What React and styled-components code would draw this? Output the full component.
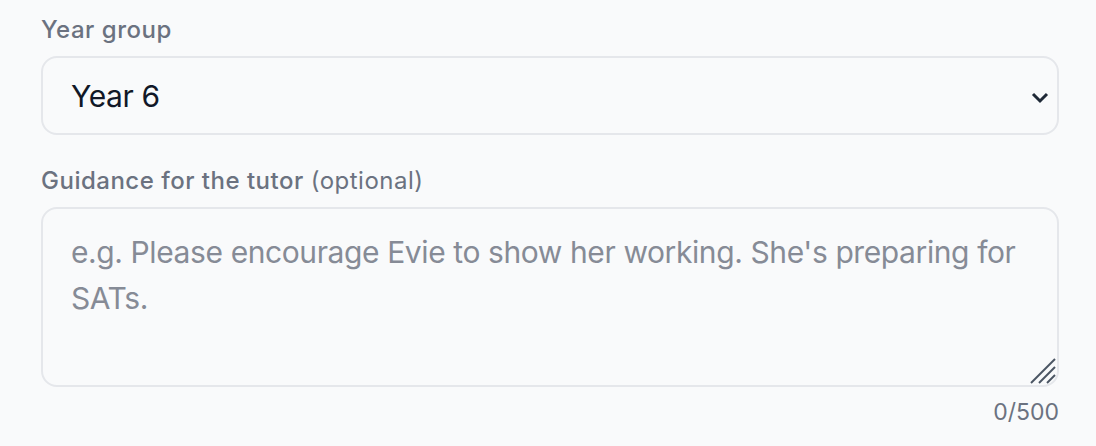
import React from "react";
import styled, { createGlobalStyle } from "styled-components";

const Global = createGlobalStyle`
  html, body {
    margin: 0;
    padding: 0;
    background: #f9fafb;
  }
  body {
    font-family: Inter, "Noto Sans", "Liberation Sans", sans-serif;
  }
`;

const Form = styled.form`
  padding: 14px 37px 0 41px;
  display: flex;
  flex-direction: column;
  gap: 30px;
`;

const Field = styled.div`
  display: flex;
  flex-direction: column;
  gap: 10px;
`;

const Label = styled.label`
  font-size: 24px;
  line-height: 32px;
  font-weight: 500;
  letter-spacing: 0.5px;
  color: #6b7280;
`;

const Hint = styled.span`
  font-weight: 400;
`;

const SelectWrap = styled.div`
  position: relative;
`;

const Select = styled.select`
  appearance: none;
  width: 100%;
  height: 79px;
  box-sizing: border-box;
  padding: 0 60px 0 28px;
  border: 2px solid #e5e7eb;
  border-radius: 16px;
  background: #f9fafb;
  font-family: inherit;
  font-size: 30px;
  letter-spacing: -0.4px;
  color: #111827;
  outline: none;
`;

const Chevron = styled.svg`
  position: absolute;
  right: 9px;
  top: 35px;
  pointer-events: none;
`;

const AreaWrap = styled.div`
  position: relative;
`;

const TextArea = styled.textarea`
  display: block;
  width: 100%;
  height: 180px;
  box-sizing: border-box;
  padding: 20px 28px;
  border: 2px solid #e5e7eb;
  border-radius: 16px;
  background: #f9fafb;
  font-family: inherit;
  font-size: 30px;
  line-height: 46px;
  letter-spacing: -0.4px;
  color: #111827;
  resize: none;
  outline: none;

  &::placeholder {
    color: #868b96;
  }
`;

const Grip = styled.svg`
  position: absolute;
  right: 3px;
  bottom: 3px;
  pointer-events: none;
`;

const Counter = styled.div`
  margin-top: 10px;
  text-align: right;
  font-size: 23px;
  line-height: 30px;
  color: #6b7280;
`;

export default function App() {
  return (
    <>
      <Global />
      <Form>
        <Field>
          <Label htmlFor="year">Year group</Label>
          <SelectWrap>
            <Select id="year" defaultValue="6">
              <option value="5">Year 5</option>
              <option value="6">Year 6</option>
            </Select>
            <Chevron width="20" height="14" viewBox="0 0 20 14">
              <path d="M3 3l7 7 7-7" fill="none" stroke="#1f2937" strokeWidth="3" />
            </Chevron>
          </SelectWrap>
        </Field>
        <Field>
          <Label htmlFor="guidance">
            Guidance for the tutor <Hint>(optional)</Hint>
          </Label>
          <div>
            <AreaWrap>
              <TextArea
                id="guidance"
                placeholder="e.g. Please encourage Evie to show her working. She's preparing for SATs."
              />
              <Grip width="26" height="26" viewBox="0 0 26 26">
                <g stroke="#4b5563" strokeWidth="2">
                  <path d="M1 25L25 1" />
                  <path d="M9 25L25 9" />
                  <path d="M17 25L25 17" />
                </g>
              </Grip>
            </AreaWrap>
            <Counter>0/500</Counter>
          </div>
        </Field>
      </Form>
    </>
  );
}
